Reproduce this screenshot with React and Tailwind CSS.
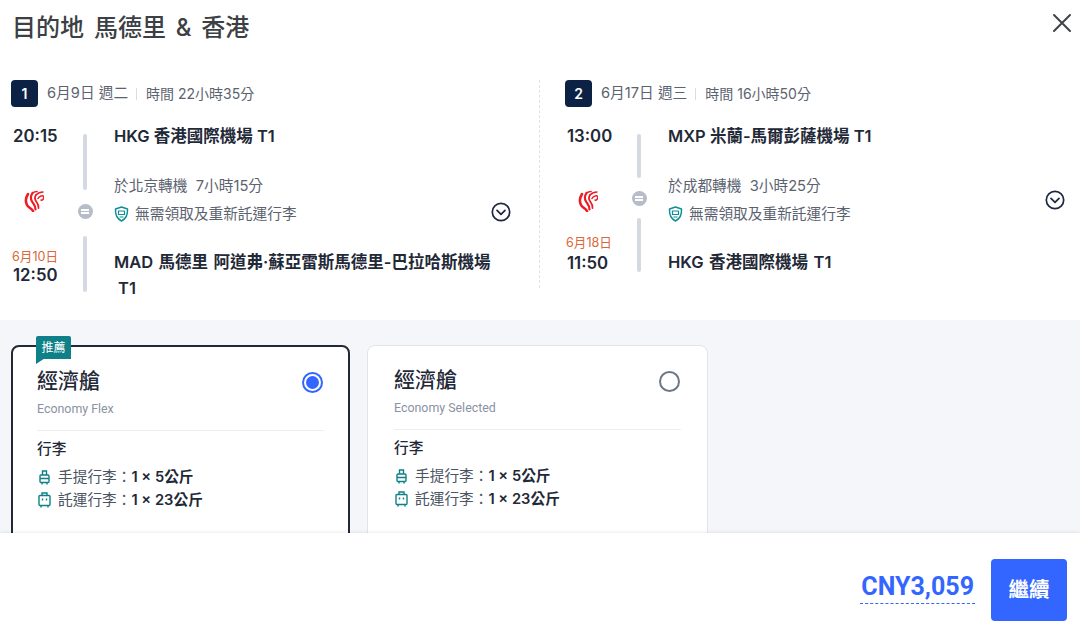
const font = { fontFamily: '"Inter","Noto Sans CJK TC","Noto Sans",sans-serif' };
const latin = { fontFamily: '"Roboto","Noto Sans CJK TC",sans-serif' };

function Logo() {
  return (
    <svg width="20" height="22" viewBox="0 0 20 22" fill="none" stroke="#ee1c25" strokeLinecap="round">
      <path d="M4 4C1.500 8 1.500 12 3 15s4.500 3 6 6" strokeWidth="2.600" />
      <path d="M8.500 3C6.500 6 6.500 9 8 11.500s3.500 4 3.500 8" strokeWidth="2.200" />
      <path d="M8.500 3c1.500-1 3-1.500 4.500-1.500" strokeWidth="1.700" />
      <path d="M12 5c-1.500 2-1 5 .5 7s2.500 3 2 6" strokeWidth="1.800" />
      <path d="M12 5c2-2 4.500-3 7-3" strokeWidth="1.400" />
      <path d="M14 8.500c1-2 3.500-3 5-2.500s.5 5-2 4" strokeWidth="1.500" />
    </svg>
  );
}

function Transfer() {
  return (
    <div className="w-[15px] h-[15px] rounded-full bg-[#b6bcc8] flex flex-col items-center justify-center gap-[1.500px]">
      <span className="w-[8px] h-[1.500px] bg-white" />
      <span className="w-[8px] h-[1.500px] bg-white" />
    </div>
  );
}

function Shield() {
  return (
    <svg width="15" height="16" viewBox="0 0 15 16" fill="none" stroke="#0f8f96" strokeWidth="1.500" strokeLinejoin="round">
      <path d="M1.500 3 7.500 1l6 2c.3 5-1 9.500-6 12-5-2.500-6.300-7-6-12Z" />
      <path d="M4.500 5h6v3.500h-6zM5.500 11h4" strokeWidth="1.200" />
    </svg>
  );
}

function Chevron() {
  return (
    <svg width="20" height="20" viewBox="0 0 20 20" fill="none" stroke="#1c2740" strokeWidth="1.700" strokeLinecap="round" strokeLinejoin="round">
      <circle cx="10" cy="10" r="8.700" />
      <path d="m6 8.300 4 4 4-4" />
    </svg>
  );
}

function Cabin() {
  return (
    <svg width="11" height="15" viewBox="0 0 11 15" fill="none" stroke="#0f8088" strokeWidth="1.400">
      <path d="M3.500 5V1h4v4" />
      <rect x="1" y="5" width="9" height="7.500" rx="1" />
      <path d="M1 8.500h9M3 12.500V14.500M8 12.500V14.500" />
    </svg>
  );
}

function Checked() {
  return (
    <svg width="13" height="16" viewBox="0 0 13 16" fill="none" stroke="#0f8088" strokeWidth="1.400">
      <path d="M4 3.500V1h5v2.500" />
      <rect x="1" y="3.500" width="11" height="10" rx="1" />
      <path d="M4.500 6.500v2M8.500 6.500v2M3 13.500V15.500M10 13.500V15.500" />
    </svg>
  );
}

function Flight({ n, date, dur, from, via, viaTime, to, toTail, dep, arr, arrDate, tall }) {
  return (
    <div className="flex-1 min-w-0">
      <div className="flex items-center h-[27px] ml-[-1px]">
        <div className="w-[27px] h-[27px] rounded-[4px] bg-[#0b2244] text-white text-[14px] font-semibold flex items-center justify-center">{n}</div>
        <span className="ml-[9px] text-[14.700px] text-[#5c6370]">{date}</span>
        <span className="ml-[8px] mr-[9px] w-px h-[12px] bg-[#d9dce2]" />
        <span className="text-[14px] text-[#5c6370]">{dur}</span>
      </div>
      <div className={`relative mt-[19px] flex ${tall ? "h-[166px]" : "h-[146px]"}`}>
        <div className="w-[60px] shrink-0 flex flex-col text-[#1f2937]">
          <div className="text-[16.800px] font-semibold leading-[20px] ml-px">{dep}</div>
          <div className="ml-[12px] mt-[44px] h-[22px]"><Logo /></div>
          <div className={`${tall ? "mt-[37px]" : "mt-[23px]"} text-[12.600px] leading-[16px] text-[#d9683a]`}>{arrDate}</div>
          <div className={`text-[16.800px] font-semibold leading-[20px] ml-px ${tall ? "mt-0" : "mt-[2px]"}`}>{arr}</div>
        </div>
        <div className="w-[28px] shrink-0 ml-[-1px] flex flex-col items-center pt-[8px]">
          <span className={`w-[4px] rounded-full bg-[#d5d9e1] ${tall ? "h-[56px]" : "h-[46px]"}`} />
          <div className={tall ? "mt-[14px]" : "mt-[13px]"}><Transfer /></div>
          <span className={`w-[4px] rounded-full bg-[#d5d9e1] h-[56px] ${tall ? "mt-[17px]" : "mt-[12px]"}`} />
        </div>
        <div className="ml-[15px] flex-1 min-w-0">
          <div className="text-[16.500px] font-semibold leading-[20px] text-[#1f2937]">{from}</div>
          <div className="mt-[30px] text-[14.700px] leading-[20px] text-[#5c6370] whitespace-pre">{via}  {viaTime}</div>
          <div className="mt-[8px] flex items-center gap-[6px] text-[14.700px] leading-[20px] text-[#5c6370]"><Shield />無需領取及重新託運行李</div>
          <div className="mt-[25px] text-[16.500px] font-semibold leading-[26px] text-[#1f2937] [word-spacing:1.300px]">{to}</div>
          {toTail && <div className="pl-[4px] text-[16.500px] font-semibold leading-[26px] text-[#1f2937]">{toTail}</div>}
        </div>
      </div>
    </div>
  );
}

function Card({ selected, name }) {
  return (
    <div className={`relative flex-none h-[200px] bg-white rounded-[8px] pt-[20px] ${selected ? "w-[339px] border-2 border-[#1f2937] px-[24px]" : "w-[341px] border border-[#e1e4ea] px-[26px]"}`}>
      {selected && (
        <div className="absolute left-[23px] top-[-11px] w-[35px] h-[28px] bg-[#0f8088] rounded-t-[2px] text-white text-[12px] leading-[24px] text-center [clip-path:polygon(0_0,100%_0,100%_82%,22%_82%,0_100%)]">推薦</div>
      )}
      <div className="flex items-center justify-between h-[28px]">
        <div className="text-[21px] font-medium leading-[28px] text-[#1f2937]">經濟艙</div>
        {selected ? (
          <div className="w-[21px] h-[21px] mt-[2px] mr-px rounded-full border-2 border-[#3366ff] flex items-center justify-center"><span className="w-[13px] h-[13px] rounded-full bg-[#3366ff]" /></div>
        ) : (
          <div className="w-[21px] h-[21px] mt-[2px] mr-px rounded-full border-2 border-[#6d7687]" />
        )}
      </div>
      <div style={latin} className="mt-[6px] text-[12.400px] leading-[16px] text-[#8a92a3]">{name}</div>
      <div className="mt-[13px] border-t border-[#eceef2] pt-[8px]">
        <div className="text-[14.700px] font-medium leading-[20px] text-[#1f2937]">行李</div>
        <div className="mt-[8px] flex items-center text-[14.700px] leading-[20px] text-[#4b5563]">
          <span className="w-[14px] flex justify-center"><Cabin /></span>
          <span className="ml-[7px]">手提行李：</span><b className="font-semibold text-[#1f2937]">1 × 5公斤</b>
        </div>
        <div className="mt-[3px] flex items-center text-[14.700px] leading-[20px] text-[#4b5563]">
          <span className="w-[14px] flex justify-center"><Checked /></span>
          <span className="ml-[7px]">託運行李：</span><b className="font-semibold text-[#1f2937]">1 × 23公斤</b>
        </div>
      </div>
    </div>
  );
}

export default function App() {
  return (
    <div style={font} className="relative w-[1080px] h-[625px] overflow-hidden bg-white flex flex-col">
      <div className="h-[80px] shrink-0 pl-[12px] pr-[8px] pt-[12px] flex items-start justify-between">
        <h1 className="text-[24px] leading-[32px] font-medium text-[#3c3f44] [word-spacing:3.500px]">目的地 馬德里 &amp; 香港</h1>
        <svg width="20" height="20" viewBox="0 0 20 20" className="mt-[1px]" stroke="#3f4349" strokeWidth="2" strokeLinecap="round"><path d="m2 2 16 16M18 2 2 18" /></svg>
      </div>
      <div className="h-[240px] shrink-0 pl-[12px] flex">
        <div className="w-[527px] shrink-0 flex pr-[16px] relative h-[208px]">
          <Flight tall n="1" date="6月9日 週二" dur="時間 22小時35分" dep="20:15" arr="12:50" arrDate="6月10日" from="HKG 香港國際機場 T1" via="於北京轉機" viaTime="7小時15分" to="MAD 馬德里 阿道弗·蘇亞雷斯馬德里-巴拉哈斯機場" toTail="T1" />
          <div className="absolute right-[-1px] top-[0px] h-[208px] border-l border-dashed border-[#dfe2e8]" />
          <div className="absolute left-[479px] top-[122px]"><Chevron /></div>
        </div>
        <div className="w-[527px] shrink-0 ml-[27px] flex relative h-[208px]">
          <Flight n="2" date="6月17日 週三" dur="時間 16小時50分" dep="13:00" arr="11:50" arrDate="6月18日" from="MXP 米蘭-馬爾彭薩機場 T1" via="於成都轉機" viaTime="3小時25分" to="HKG 香港國際機場 T1" />
          <div className="absolute left-[479px] top-[110px]"><Chevron /></div>
        </div>
      </div>
      <div className="flex-1 min-h-0 bg-[#f4f6fa] pl-[11px] pt-[25px] flex items-start gap-[17px] overflow-hidden">
        <Card selected name="Economy Flex" />
        <Card name="Economy Selected" />
      </div>
      <div className="h-[92px] shrink-0 bg-white shadow-[0_-1px_3px_rgba(0,0,0,0.08)] pr-[13px] flex items-end justify-end pb-[4px] relative">
        <div style={latin} className="mb-[17px] text-[25px] font-bold leading-[30px] text-[#3366ff] border-b border-dashed border-[#3366ff] pb-[1px] px-px">CNY3,059</div>
        <div className="ml-[16px] w-[76px] h-[62px] rounded-[4px] bg-[#3366ff] text-white text-[20.500px] font-semibold flex items-center justify-center">繼續</div>
      </div>
    </div>
  );
}
